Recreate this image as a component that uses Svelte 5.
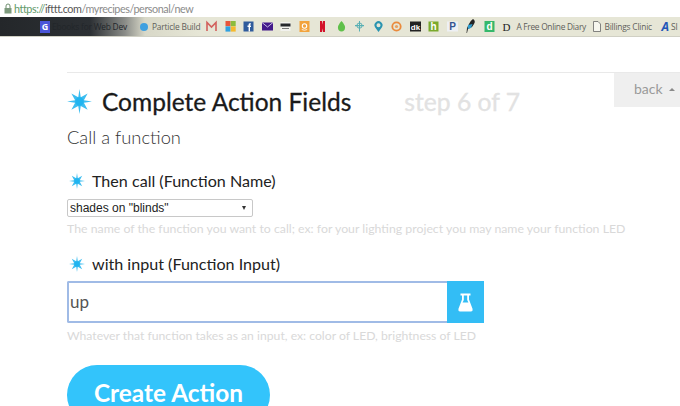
<script lang="ts">
  // favicons in the bookmark bar, left to right
  const tiles = [
    "gmail", "windows", "facebook", "mail", "news", "amazon", "netflix", "leaf",
    "cross", "pin", "ring", "dk", "h", "p", "feather", "d"
  ];
</script>

{#snippet spark(size)}
  <svg class="spark" width={size} height={size} viewBox="0 0 24 24" aria-hidden="true">
    <path d="M12 0 L13.2 7.8 L19.8 4.2 L16.2 10.8 L24 12 L16.2 13.2 L19.8 19.8 L13.2 16.2 L12 24 L10.8 16.2 L4.2 19.8 L7.8 13.2 L0 12 L7.8 10.8 L4.2 4.2 L10.8 7.8 Z" fill="#3cbdf0" />
    <circle cx="12" cy="12" r="4" fill="#1fb4f0" />
  </svg>
{/snippet}

{#snippet favicon(name)}
  <svg class="fav" width="11" height="13" viewBox="0 0 11 13" aria-hidden="true">
    {#if name === "gmail"}
      <path d="M1 11 V2.5 L5.5 7 L10 2.5 V11" fill="none" stroke="#d2605c" stroke-width="1.6" />
    {:else if name === "windows"}
      <rect x="0.5" y="1" width="5" height="5.2" fill="#e8553a" />
      <rect x="5.7" y="1" width="5" height="5.2" fill="#8cbc3c" />
      <rect x="0.5" y="6.4" width="5" height="5.2" fill="#2fa0e0" />
      <rect x="5.7" y="6.4" width="5" height="5.2" fill="#f5b92e" />
    {:else if name === "facebook"}
      <rect x="0.5" y="1.5" width="10" height="10" fill="#2f5b9c" />
      <path d="M7.9 3.2 H6.8 Q5.6 3.2 5.6 4.5 V5.6 H4.5 V7 H5.6 V11.5 H7 V7 H8 V5.6 H7 V4.8 Q7 4.5 7.4 4.5 H7.9 Z" fill="#ffffff" />
    {:else if name === "mail"}
      <rect x="0" y="2.5" width="11" height="8" fill="#43198a" />
      <path d="M0 2.5 L5.5 7 L11 2.5" fill="none" stroke="#c9bce6" stroke-width="1" />
    {:else if name === "news"}
      <rect x="0.5" y="2" width="10" height="9" fill="#f2f2ee" />
      <rect x="0.5" y="3.5" width="10" height="3" fill="#26282c" />
      <rect x="2" y="8" width="7" height="1" fill="#777777" />
    {:else if name === "amazon"}
      <rect x="0.5" y="1" width="10" height="11" fill="#f2a33c" />
      <circle cx="5.5" cy="6" r="2.2" fill="none" stroke="#ffffff" stroke-width="1.1" />
      <path d="M2.8 9.5 Q5.5 11 8.2 9.5" fill="none" stroke="#ffffff" stroke-width="0.8" />
    {:else if name === "netflix"}
      <path d="M3 1 H5 L8 12 H6 Z M3 1 H5 V12 H3 Z M6 1 H8 V12 H6 Z" fill="#d3122a" />
    {:else if name === "leaf"}
      <path d="M5.5 1 Q10.5 6 8.5 10 Q5.5 13 2.5 10 Q0.5 6 5.5 1 Z" fill="#5fc04a" />
    {:else if name === "cross"}
      <path d="M5 1 H6 V5 H10 V6.2 H6 V11.5 H5 V6.2 H1 V5 H5 Z" fill="#58b0b4" />
      <circle cx="5.5" cy="5.6" r="2.6" fill="none" stroke="#58b0b4" stroke-width="1" />
    {:else if name === "pin"}
      <path d="M5.5 12 L2.2 7.5 A4 4 0 1 1 8.8 7.5 Z M5.5 7.2 A2 2 0 1 0 5.5 3.2 A2 2 0 1 0 5.5 7.2 Z" fill="#2a94b0" fill-rule="evenodd" />
    {:else if name === "ring"}
      <circle cx="5.5" cy="6.5" r="4.2" fill="none" stroke="#ea8a3c" stroke-width="1.8" />
      <circle cx="5.5" cy="6.5" r="1.6" fill="#e8a060" />
    {:else if name === "dk"}
      <rect x="0" y="1.5" width="11" height="10" fill="#222222" />
      <text x="5.5" y="9.5" class="fav-text" fill="#ffffff">dk</text>
    {:else if name === "h"}
      <rect x="0.5" y="1.5" width="10" height="10" fill="#7aa92c" />
      <text x="5.5" y="10" class="fav-text big" fill="#ffffff">h</text>
    {:else if name === "p"}
      <rect x="0" y="1.5" width="11" height="10" fill="#eef0f4" />
      <text x="5.5" y="10" class="fav-text big" fill="#34558f">P</text>
    {:else if name === "feather"}
      <path d="M8 -1 Q11 1 9 4 L7 7 L3 9 L2 13 L1.5 13 L2 8 L4 4 Q5 1 8 -1 Z" fill="#252525" />
      <path d="M3 5 L7.5 4 L6 8 L2.8 9 Z" fill="#2f9ed0" />
    {:else if name === "d"}
      <rect x="0.5" y="1" width="10" height="11" fill="#35b86b" />
      <text x="5.5" y="10" class="fav-text big" fill="#ffffff">d</text>
    {/if}
  </svg>
{/snippet}

<div class="page">
  <div class="urlbar">
    <svg width="8" height="11" viewBox="0 0 8 11" aria-hidden="true">
      <path d="M2 5 V3 a2 2 0 0 1 4 0 V5" fill="none" stroke="#6f8f6f" stroke-width="1" />
      <rect x="0.5" y="5" width="7" height="5.5" fill="#7d9a7d" />
    </svg>
    <span><span class="https">https://</span><span class="host">ifttt.com</span>/myrecipes/personal/new</span>
  </div>

  <div class="bookmarks">
    <span class="ebook">G</span>
    <span class="bm ebook-text">Ebooks for Web Dev</span>
    <span class="dot"></span>
    <span class="bm particle">Particle Build</span>
    <div class="tiles">
      {#each tiles as t}
        {@render favicon(t)}
      {/each}
    </div>
    <span class="d">D</span>
    <span class="bm diary">A Free Online Diary</span>
    <svg class="doc" width="8" height="11" viewBox="0 0 8 11" aria-hidden="true">
      <path d="M0.5 0.5 H5 L7.5 3 V10.5 H0.5 Z" fill="#f6f6ee" stroke="#666" stroke-width="0.8" />
    </svg>
    <span class="bm clinic">Billings Clinic</span>
    <span class="a-icon">A</span>
    <span class="bm">Sl</span>
  </div>

  <main class="content">
    <div class="head-rule">
      <a class="back" href="#back">back <i class="caret"></i></a>
    </div>

    <div class="title-row">
      {@render spark(25)}
      <h1>Complete Action Fields</h1>
      <span class="step">step 6 of 7</span>
    </div>
    <p class="subtitle">Call a function</p>

    <div class="field first">
      <div class="label">{@render spark(16)}<span>Then call (Function Name)</span></div>
      <div class="select">
        <span>shades on "blinds"</span>
        <i class="arrow"></i>
      </div>
      <p class="hint">The name of the function you want to call; ex: for your lighting project you may name your function LED</p>
    </div>

    <div class="field second">
      <div class="label">{@render spark(16)}<span>with input (Function Input)</span></div>
      <div class="input-wrap">
        <div class="input">up</div>
        <div class="flask">
          <svg width="15" height="19" viewBox="0 0 15 19" aria-hidden="true">
            <path d="M2.5 0.5 H12.5 V2.4 H11 V6.5 L14.6 16 Q15 18.5 13 18.5 H2 Q0 18.5 0.4 16 L4 6.5 V2.4 H2.5 Z M5.8 2.4 V7 L4.6 9.5 H10.4 L9.2 7 V2.4 Z" fill="#ffffff" fill-rule="evenodd" />
          </svg>
        </div>
      </div>
      <p class="hint">Whatever that function takes as an input, ex: color of LED, brightness of LED</p>
    </div>

    <div class="create">Create Action</div>
  </main>
</div>

<style>
  :global(body) {
    margin: 0;
    background: #ffffff;
  }
  .page {
    width: 680px;
    height: 406px;
    overflow: hidden;
    position: relative;
    font-family: Lato, "Open Sans", sans-serif;
  }
  .urlbar {
    height: 17px;
    display: flex;
    align-items: center;
    gap: 2px;
    padding-left: 4px;
    font-size: 10.8px;
    letter-spacing: -0.45px;
    color: #8b8b8b;
  }
  .https {
    color: #5f9a6a;
  }
  .host {
    color: #555555;
  }
  .bookmarks {
    height: 20px;
    display: flex;
    align-items: center;
    white-space: nowrap;
    overflow: hidden;
    font-family: "Open Sans", sans-serif;
    font-size: 8.4px;
    color: #5f5f5a;
    background: linear-gradient(90deg, #24272a 0, #2c3034 90px, #8a8c88 125px, #d8d8c8 145px, #e6e6d6 200px, #e6e6d6 100%);
    border-bottom: 1px solid #d0d0c4;
    box-sizing: border-box;
  }
  .bm {
    letter-spacing: -0.2px;
  }
  .ebook {
    margin-left: 40px;
    width: 10px;
    height: 12px;
    flex: none;
    display: flex;
    align-items: center;
    justify-content: center;
    font-weight: 700;
    font-size: 9px;
    background: #4a55d8;
    color: #ffffff;
  }
  .ebook-text {
    margin-left: 2px;
    width: 88px;
    color: #22262a;
  }
  .dot {
    width: 8px;
    height: 8px;
    border-radius: 50%;
    background: #3fa0e0;
    flex: none;
  }
  .particle {
    margin-left: 4px;
    width: 54px;
  }
  .tiles {
    display: flex;
    gap: 7.5px;
    overflow: visible;
  }
  .fav {
    flex: none;
    overflow: visible;
  }
  .fav-text {
    font-family: "Liberation Sans", sans-serif;
    font-size: 8px;
    font-weight: 700;
    text-anchor: middle;
  }
  .fav-text.big {
    font-size: 10px;
  }
  .d {
    margin-left: 8px;
    font-family: "Liberation Serif", serif;
    font-size: 11px;
    color: #222222;
  }
  .diary {
    margin-left: 6px;
    width: 77px;
    letter-spacing: -0.3px;
  }
  .doc {
    flex: none;
  }
  .clinic {
    margin-left: 3px;
    width: 57px;
  }
  .a-icon {
    color: #2456b8;
    font-weight: 700;
    font-style: italic;
    font-size: 12px;
    margin-right: 2px;
  }
  .content {
    padding-left: 67px;
  }
  .head-rule {
    margin-top: 35px;
    height: 0;
    border-top: 1px solid #e9e9e9;
    position: relative;
  }
  .back {
    position: absolute;
    top: 0;
    right: 0;
    width: 66px;
    height: 34px;
    background: #efefef;
    color: #9a9a9a;
    font-size: 14px;
    text-decoration: none;
    text-indent: 20px;
    line-height: 32px;
    box-sizing: border-box;
  }
  .caret {
    display: inline-block;
    width: 0;
    height: 0;
    margin-left: 3px;
    vertical-align: 3px;
    border: 3px solid transparent;
    border-top: 0;
    border-bottom: 3px solid #8a8a8a;
  }
  .title-row {
    display: flex;
    align-items: center;
    margin-top: 12px;
    height: 32px;
  }
  .spark {
    flex: none;
  }
  h1 {
    margin: 0 0 0 10px;
    font-size: 24.5px;
    font-weight: 400;
    color: #1a1a1a;
    -webkit-text-stroke: 0.3px #1a1a1a;
  }
  .step {
    margin-left: 53px;
    font-size: 24.7px;
    color: #e2e2e2;
    -webkit-text-stroke: 0.3px #e2e2e2;
  }
  .subtitle {
    margin: 9px 0 0;
    font-size: 18.3px;
    font-weight: 300;
    line-height: 22px;
    color: #333333;
  }
  .field.first {
    margin-top: 23px;
  }
  .field.second {
    margin-top: 17px;
  }
  .label {
    display: flex;
    align-items: center;
    gap: 7px;
    padding-left: 2px;
    font-size: 16.1px;
    line-height: 20px;
    color: #222222;
  }
  .select {
    margin-top: 8px;
    width: 186px;
    height: 18px;
    box-sizing: border-box;
    border: 1px solid #c8c8c8;
    border-radius: 2px;
    display: flex;
    align-items: center;
    justify-content: space-between;
    padding: 0 6px 0 2px;
    font-family: "Liberation Sans", Arial, sans-serif;
    font-size: 12px;
    color: #222222;
  }
  .arrow {
    width: 0;
    height: 0;
    border: 2.5px solid transparent;
    border-bottom: 0;
    border-top: 4px solid #333333;
  }
  .hint {
    margin: 4px 0 0;
    font-size: 12.3px;
    line-height: 16px;
    color: #d9d9d9;
    white-space: nowrap;
  }
  .input-wrap {
    margin-top: 7px;
    width: 417px;
    height: 42px;
    display: flex;
  }
  .input {
    flex: 1;
    border: 2px solid #a0bbe6;
    border-right: 0;
    border-radius: 2px 0 0 2px;
    font-size: 17px;
    line-height: 38px;
    padding-left: 1px;
    color: #555555;
  }
  .flask {
    width: 37px;
    background: #33bdf5;
    display: flex;
    align-items: center;
    justify-content: center;
  }
  .second .hint {
    margin-top: 5px;
    font-size: 12.2px;
  }
  .create {
    margin-top: 21px;
    width: 203px;
    height: 60px;
    border-radius: 30px;
    background: #33c4fb;
    color: #ffffff;
    font-size: 24.4px;
    font-weight: 700;
    text-align: center;
    line-height: 56px;
  }
</style>
